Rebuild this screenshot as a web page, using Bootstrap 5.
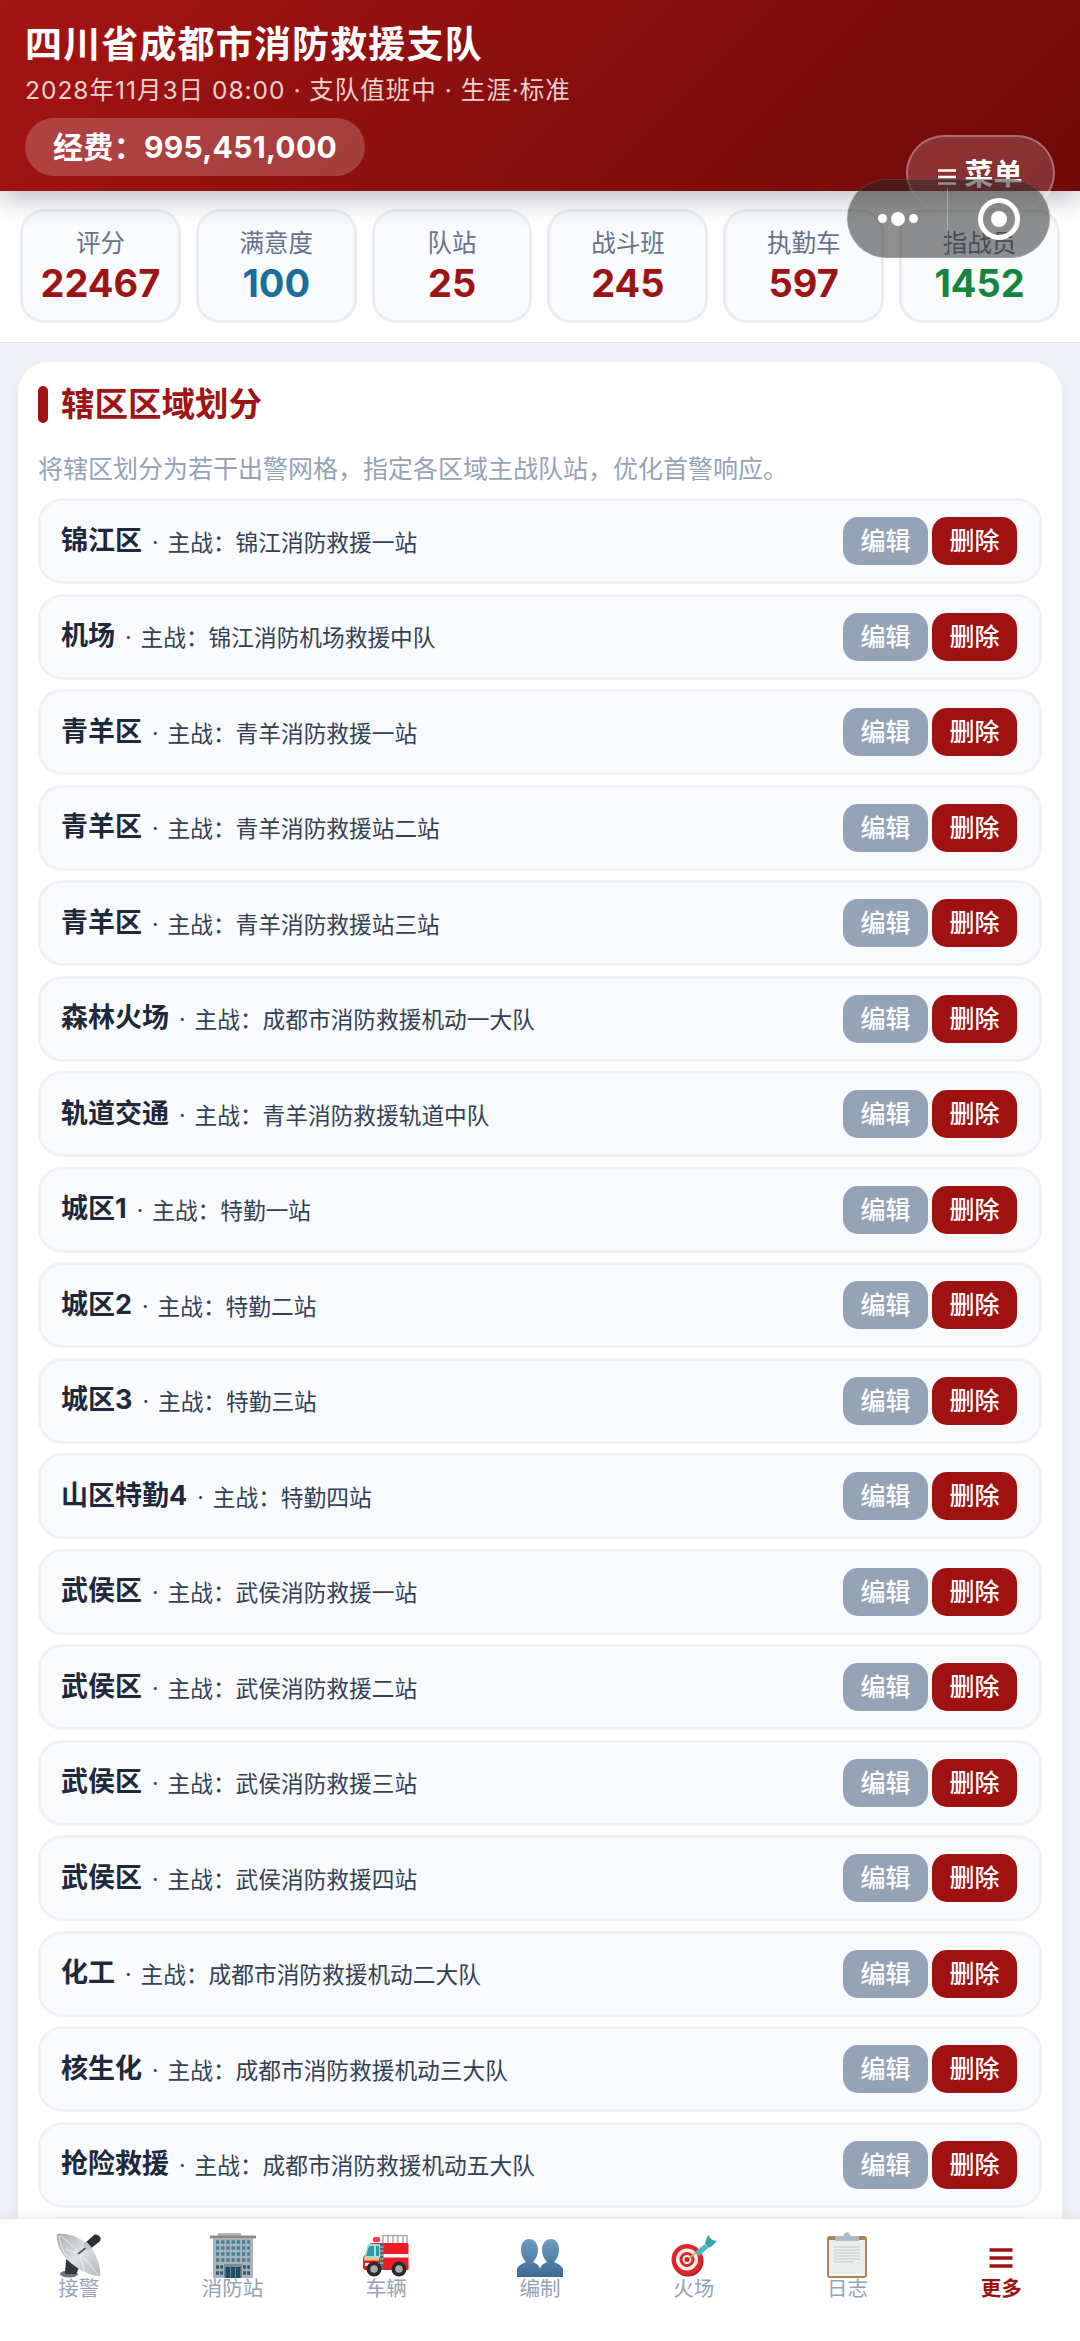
<!DOCTYPE html>
<html lang="zh-CN">
<head>
    <meta charset="UTF-8">
    <title>辖区区域划分</title>
    <link href="https://cdn.jsdelivr.net/npm/bootstrap@5.3.3/dist/css/bootstrap.min.css" rel="stylesheet">
    <style>
        html, body { height: 100%; overflow: hidden; }
        body { background: #eef2f6; font-family: Inter, "Noto Sans CJK SC", sans-serif; color: #1e293b; }
        .app-shell { height: 100vh; position: relative; }
        .top-head { background: linear-gradient(135deg, #a61414 0%, #860e0e 55%, #700909 100%); color: #fff; padding: 21px 25px 15px; box-shadow: 0 8px 24px rgba(15, 23, 42, .28); position: relative; z-index: 3; height: 191px; }
        .top-title { font-size: 37px; line-height: 48px; font-weight: 700; letter-spacing: 1.15px; margin: 0; }
        .top-sub { font-size: 24.5px; line-height: 34px; margin-top: 4px; letter-spacing: 1px; color: rgba(255, 255, 255, .82); }
        .fund-pill { display: inline-block; height: 58px; line-height: 58px; width: 340px; text-align: center; margin-top: 11px; border-radius: 29px; background: rgba(255, 255, 255, .2); font-size: 30px; font-weight: 700; letter-spacing: .3px; }
        .menu-btn { position: absolute; left: 906px; top: 135px; width: 149px; height: 76px; border-radius: 38px; border: 2px solid rgba(255, 255, 255, .3); background: rgba(255, 255, 255, .16); color: #fff; font-size: 29px; font-weight: 700; z-index: 4; padding-top: 16px; }
        .wx-capsule { position: absolute; left: 847px; top: 179px; width: 203px; height: 79px; border-radius: 40px; background: rgba(40, 40, 40, .52); border: 1px solid rgba(255, 255, 255, .12); z-index: 5; }
        .wx-split { width: 1px; height: 62px; background: rgba(255, 255, 255, .3); }
        .wx-dot { width: 9px; height: 9px; border-radius: 50%; background: #fff; }
        .wx-dot-big { width: 14px; height: 14px; }
        .wx-ring { width: 42px; height: 42px; border-radius: 50%; border: 5px solid #fff; }
        .wx-ring i { display: block; width: 16px; height: 16px; border-radius: 50%; background: #fff; }
        .stats-bar { background: #fff; padding: 18px 20px 19px; gap: 15px; border-bottom: 1px solid #e2e8f0; }
        .stat-box { flex: 1 1 0; height: 114px; background: #f8fafc; border: 3px solid #eaedf1; border-radius: 24px; text-align: center; padding-top: 14px; }
        .stat-label { font-size: 24.5px; line-height: 34px; color: #64748b; }
        .stat-num { font-size: 38px; line-height: 46px; font-weight: 700; color: #9b1515; }
        .stat-num.is-blue { color: #1a6e9c; }
        .stat-num.is-green { color: #15853f; }
        .main-area { overflow: hidden; padding: 19px 18px 0; }
        .sheet { background: #fff; border-radius: 30px 30px 0 0; padding: 24px 20px 0; box-shadow: 0 3px 12px rgba(15, 23, 42, .05); height: 100%; overflow: hidden; }
        .sheet-bar { width: 10px; height: 37px; background: #9f1414; border-radius: 5px; margin-right: 13px; }
        .sheet-title { font-size: 33.5px; line-height: 37px; font-weight: 700; color: #9f1414; margin: 0; }
        .sheet-desc { font-size: 25px; line-height: 34px; color: #94a3b8; margin: 29px 0 12px; }
        .area-row { height: 86px; background: #f8fafc; border: 3px solid #eff1f4; border-radius: 24px; padding: 0 22px 0 20px; margin: 0 0 9.5px; }
        .area-name { font-size: 27px; font-weight: 700; color: #1e293b; }
        .area-sep { font-size: 22.7px; color: #334155; margin: 0 9px 0 10px; }
        .area-main { font-size: 22.7px; color: #334155; position: relative; top: 1px; }
        .act-btn { width: 85px; height: 48px; line-height: 48px; padding: 0; border: 0; border-radius: 15px; font-size: 25px; font-weight: 500; color: #fff; }
        .act-edit { background: #94a3b8; }
        .act-del { background: #a01212; }
        .tab-bar { height: 122px; background: #fff; box-shadow: 0 -3px 10px rgba(15, 23, 42, .07); position: relative; z-index: 2; flex-shrink: 0; padding: 0 2px; }
        .tab-item { flex: 1 1 0; text-align: center; padding-top: 13px; color: #94a3b8; font-size: 20.5px; line-height: 22px; }
        .tab-item svg { display: block; margin: 0 auto; width: 46px; height: 46px; }
        .tab-item.is-on { color: #a01212; font-weight: 700; }
    </style>
</head>
<body>

<div class="app-shell d-flex flex-column">
    <header class="top-head">
        <h1 class="top-title">四川省成都市消防救援支队</h1>
        <div class="top-sub">2028年11月3日 08:00 · 支队值班中 · 生涯·标准</div>
        <div class="fund-pill">经费：995,451,000</div>
    </header>

    <div class="menu-btn d-flex justify-content-center align-items-start gap-2">
        <svg width="18" height="16" viewBox="0 0 18 16" class="mt-3"><path d="M0 1.500h18M0 8h18M0 14.500h18" stroke="#fff" stroke-width="2.400"/></svg>
        <span>菜单</span>
    </div>

    <div class="wx-capsule d-flex align-items-center">
        <div class="d-flex flex-fill justify-content-center align-items-center gap-1">
            <span class="wx-dot"></span><span class="wx-dot wx-dot-big"></span><span class="wx-dot"></span>
        </div>
        <span class="wx-split"></span>
        <div class="d-flex flex-fill justify-content-center align-items-center">
            <span class="wx-ring d-flex justify-content-center align-items-center"><i></i></span>
        </div>
    </div>

    <div class="stats-bar d-flex">
        <div class="stat-box"><div class="stat-label">评分</div><div class="stat-num">22467</div></div>
        <div class="stat-box"><div class="stat-label">满意度</div><div class="stat-num is-blue">100</div></div>
        <div class="stat-box"><div class="stat-label">队站</div><div class="stat-num">25</div></div>
        <div class="stat-box"><div class="stat-label">战斗班</div><div class="stat-num">245</div></div>
        <div class="stat-box"><div class="stat-label">执勤车</div><div class="stat-num">597</div></div>
        <div class="stat-box"><div class="stat-label">指战员</div><div class="stat-num is-green">1452</div></div>
    </div>

    <main class="main-area flex-grow-1">
        <section class="sheet">
            <div class="d-flex align-items-center">
                <span class="sheet-bar"></span>
                <h2 class="sheet-title">辖区区域划分</h2>
            </div>
            <p class="sheet-desc">将辖区划分为若干出警网格，指定各区域主战队站，优化首警响应。</p>
            <div id="areaList"></div>
        </section>
    </main>

    <nav class="tab-bar d-flex">
        <div class="tab-item">
            <svg viewBox="0 0 46 46">
                <defs><linearGradient id="dishFill" x1="0" y1="0" x2="1" y2="1"><stop offset="0" stop-color="#a4a8ad"/><stop offset=".5" stop-color="#dfe2e5"/><stop offset="1" stop-color="#b3b7bb"/></linearGradient></defs>
                <ellipse cx="13" cy="42" rx="9" ry="3.500" fill="#6d747b"/>
                <path d="M10 27l13 9-3 6H9z" fill="#33383d"/>
                <path d="M1 2C14 0 32 8 39 22c4 9 6 17 5 22C33 44 18 36 8 24 3 17 0 9 1 2z" fill="url(#dishFill)"/>
                <path d="M3 4c1 8 4 15 8 20M4 4c10 6 22 18 38 39M22 21L9 17M24 23l5 18" stroke="#f4f5f6" stroke-width=".8" fill="none"/>
                <path d="M22 22l9-7" stroke="#565b60" stroke-width="2"/>
                <path d="M29 11l9-8c2-1 5 0 6 2 1 2 1 3-1 5l-9 7z" fill="#2c2f33"/>
                <path d="M27 13l4-3 5 6-4 3z" fill="#c2c6ca"/>
            </svg>
            接警
        </div>
        <div class="tab-item">
            <svg viewBox="0 0 46 46">
                <rect x="8" y="1" width="23" height="4" fill="#b9b2a6"/>
                <rect x="0" y="3.500" width="46" height="3" fill="#8f8980"/>
                <rect x="3" y="6" width="40" height="40" fill="#a7b3b8"/>
                <path d="M6 10h34M6 16h34M6 22h34M6 28h34" stroke="#3f7fa1" stroke-width="3.500" stroke-dasharray="3.200 2"/>
                <path d="M6 35h7M6 41h7M33 35h7M33 41h7" stroke="#2f5a72" stroke-width="3.500" stroke-dasharray="3 1.200"/>
                <rect x="14" y="32" width="18" height="14" fill="#7f8b90"/>
                <path d="M15.500 35h15v11h-15z" fill="#1f4f66"/>
                <path d="M20.500 35v11M25.500 35v11" stroke="#6a9bb0" stroke-width=".8"/>
            </svg>
            消防站
        </div>
        <div class="tab-item">
            <svg viewBox="0 0 46 46">
                <path d="M20 3v9M44 3v9M20 3.500h24" stroke="#a8adb1" stroke-width="1.500" fill="none"/>
                <path d="M25 3.500v8M30 3.500v8M35 3.500v8M40 3.500v8" stroke="#a8adb1" stroke-width="1.500"/>
                <rect x="10" y="5" width="7" height="5" rx="1.500" fill="#ef3b4a"/>
                <path d="M17 11h27c1 0 1.500 1 1.500 2v25H2c-1 0-2-1-2-3v-8c0-2 1-4 3-5l3-9c1-2 2-2 4-2z" fill="#ec1c24"/>
                <path d="M5 12h13v14H1z" fill="#a8dbe0"/>
                <path d="M6 14h5v10H3zM13 14h3v10h-3z" fill="#2a9aa8"/>
                <rect x="20" y="22" width="25.500" height="3.500" fill="#fff"/>
                <rect x="1" y="26" width="15" height="2.500" fill="#f6c16a"/>
                <path d="M2 31h14v3H2z" fill="#fff"/>
                <rect x="17" y="11" width="3.500" height="27" fill="#5d6367"/>
                <path d="M17 15h3.500M17 19h3.500M17 23h3.500M17 27h3.500M17 31h3.500" stroke="#c9ccce" stroke-width="1"/>
                <circle cx="11" cy="37" r="7.500" fill="#2a2a2a"/><circle cx="11" cy="37" r="3.800" fill="#a8abad"/>
                <circle cx="36" cy="37" r="7.500" fill="#2a2a2a"/><circle cx="36" cy="37" r="3.800" fill="#a8abad"/>
            </svg>
            车辆
        </div>
        <div class="tab-item">
            <svg viewBox="0 0 46 46">
                <defs><linearGradient id="bustFill" x1="0" y1="0" x2="0" y2="1"><stop offset="0" stop-color="#6f9bc0"/><stop offset="1" stop-color="#3d6a94"/></linearGradient></defs>
                <path d="M0 45v-7c0-4 5-6 9-8-3-3-5-7-5-12C4 11 7 7 12 7s9 4 9 11c0 5-2 9-5 12 4 2 7 4 7 8v7z" fill="url(#bustFill)"/>
                <path d="M23 45v-7c0-4 3-6 7-8-3-3-5-7-5-12 0-7 4-11 9-11s8 4 8 11c0 5-2 9-5 12 4 2 9 4 9 8v7z" fill="url(#bustFill)"/>
            </svg>
            编制
        </div>
        <div class="tab-item">
            <svg viewBox="0 0 46 46">
                <circle cx="17" cy="29" r="15.500" fill="#a31a1f"/>
                <circle cx="16" cy="27.500" r="15.500" fill="#e0262c"/>
                <circle cx="16" cy="27.500" r="11" fill="#f5f0ee"/>
                <circle cx="16" cy="27.500" r="7.500" fill="#e0262c"/>
                <circle cx="16" cy="27.500" r="4.500" fill="#f5f0ee"/>
                <circle cx="16" cy="27.500" r="2.500" fill="#c9252b"/>
                <path d="M18 26l14-10" stroke="#e3b04b" stroke-width="1.800"/>
                <path d="M24 20l10-8 3 4-9 8z" fill="#4ab9c4"/>
                <path d="M34 11l3-8 4 5 5 1-5 5-4 2z" fill="#36a3b0"/>
            </svg>
            火场
        </div>
        <div class="tab-item">
            <svg viewBox="0 0 46 46">
                <rect x="3" y="4" width="40" height="42" rx="3" fill="#ad8350"/>
                <rect x="5" y="8" width="36" height="34" fill="#eceded"/>
                <path d="M10 15h26M10 18h26M10 21h26M10 24h26M10 27h26M10 30h20" stroke="#c7c9cb" stroke-width="1.200"/>
                <path d="M5 42h36v2H5z" fill="#f5f5f5"/>
                <path d="M11 4h8l2-3c1-1 3-1 4 0l2 3h8v5H11z" fill="#b6babe"/>
            </svg>
            日志
        </div>
        <div class="tab-item is-on">
            <svg viewBox="0 0 46 46"><path d="M11.500 18h23M11.500 26h23M11.500 34h23" stroke="#a01212" stroke-width="3.400"/></svg>
            更多
        </div>
    </nav>
</div>

<script src="https://cdn.jsdelivr.net/npm/bootstrap@5.3.3/dist/js/bootstrap.bundle.min.js"></script>

<script>
    const areas = [
        ['锦江区', '锦江消防救援一站'],
        ['机场', '锦江消防机场救援中队'],
        ['青羊区', '青羊消防救援一站'],
        ['青羊区', '青羊消防救援站二站'],
        ['青羊区', '青羊消防救援站三站'],
        ['森林火场', '成都市消防救援机动一大队'],
        ['轨道交通', '青羊消防救援轨道中队'],
        ['城区1', '特勤一站'],
        ['城区2', '特勤二站'],
        ['城区3', '特勤三站'],
        ['山区特勤4', '特勤四站'],
        ['武侯区', '武侯消防救援一站'],
        ['武侯区', '武侯消防救援二站'],
        ['武侯区', '武侯消防救援三站'],
        ['武侯区', '武侯消防救援四站'],
        ['化工', '成都市消防救援机动二大队'],
        ['核生化', '成都市消防救援机动三大队'],
        ['抢险救援', '成都市消防救援机动五大队']
    ];

    const list = document.getElementById('areaList');
    areas.forEach(area => {
        const row = document.createElement('div');
        row.className = 'area-row d-flex justify-content-between align-items-center';
        row.innerHTML = `
            <div><span class="area-name">${area[0]}</span><span class="area-sep">·</span><span class="area-main">主战：${area[1]}</span></div>
            <div class="d-flex gap-1">
                <button class="btn act-btn act-edit">编辑</button>
                <button class="btn act-btn act-del">删除</button>
            </div>
        `;
        list.appendChild(row);
    });
    // next row only peeks out above the tab bar
    const peek = document.createElement('div');
    peek.className = 'area-row';
    list.appendChild(peek);
</script>

</body>
</html>
